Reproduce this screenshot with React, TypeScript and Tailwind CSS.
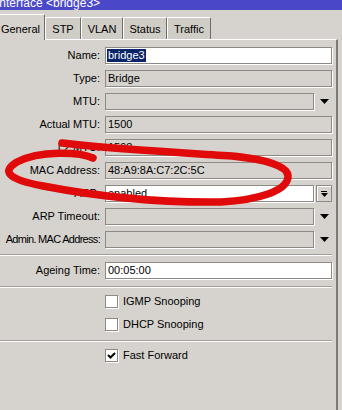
import React from "react";

const Arrow = () => (
  <svg width="9" height="5" viewBox="0 0 9 5">
    <path d="M0 0H9L4.5 5Z" fill="#000" />
  </svg>
);

type Kind = "white" | "gray";
type Tail = "none" | "arrow" | "button";

function Field({
  label,
  value,
  kind,
  tail,
  selected,
  tight,
}: {
  label: string;
  value?: string;
  kind: Kind;
  tail: Tail;
  selected?: boolean;
  tight?: boolean;
}) {
  return (
    <div className="flex h-[17px] items-center">
      <div className="flex w-[100px] shrink-0 justify-end whitespace-nowrap">
        <span className={tight ? "tracking-[-0.7px]" : ""}>{label}</span>
      </div>
      <div
        className={
          "ml-[5px] flex h-[17px] items-center border border-[#8d8a85] pl-[1px] shadow-[1px_1px_0_#ffffff] " +
          (kind === "white" ? "bg-white " : "bg-[#d6d3ce] ") +
          (tail === "none" ? "w-[227px]" : "w-[209px]")
        }
      >
        {value !== undefined &&
          (selected ? (
            <span className="bg-[#0a246a] px-[1px] leading-[13px] text-white">{value}</span>
          ) : (
            <span className="pl-[1px]">{value}</span>
          ))}
      </div>
      {tail === "arrow" && (
        <div className="flex h-[17px] w-[18px] items-center pl-[6px]">
          <Arrow />
        </div>
      )}
      {tail === "button" && (
        <div className="ml-[2px] flex h-[17px] w-[16px] flex-col items-center justify-center border border-[#8d8a85] bg-[#d6d3ce] shadow-[inset_1px_1px_0_#ffffff]">
          <div className="h-[1px] w-[6px] bg-black" />
          <div className="mt-[1px]">
            <svg width="7" height="4" viewBox="0 0 7 4">
              <path d="M0 0H7L3.5 4Z" fill="#000" />
            </svg>
          </div>
        </div>
      )}
    </div>
  );
}

function Check({ label, checked }: { label: string; checked?: boolean }) {
  return (
    <div className="flex h-[23px] items-center pl-[105px]">
      <div className="flex h-[13px] w-[13px] items-center justify-center border border-[#8d8a85] bg-white shadow-[1px_1px_0_#ffffff]">
        {checked && (
          <svg width="9" height="9" viewBox="0 0 9 9">
            <path d="M1 4 L3.5 6.5 L8 2" stroke="#000" strokeWidth="2" fill="none" />
          </svg>
        )}
      </div>
      <span className="ml-[5px]">{label}</span>
    </div>
  );
}

const Sep = ({ className }: { className: string }) => (
  <div className={"w-[332px] border-t border-b border-t-[#a19e98] border-b-white " + className} />
);

export default function App() {
  const tabs = [
    { name: "STP", w: "w-[36px]" },
    { name: "VLAN", w: "w-[42px]" },
    { name: "Status", w: "w-[44px]" },
    { name: "Traffic", w: "w-[44px]" },
  ];
  return (
    <div
      className="relative h-[410px] w-[342px] overflow-hidden bg-[#d6d3ce] text-[11px] text-black"
      style={{ fontFamily: '"Liberation Sans", Arial, sans-serif' }}
    >
      <div className="h-[10px] overflow-hidden bg-[#4a48c9]">
        <div className="ml-[-4px] mt-[-3px] whitespace-nowrap text-[12px] leading-[12px] text-white">
          Interface &lt;bridge3&gt;
        </div>
      </div>
      <div className="mt-[4px] flex h-[25px] items-end">
        <div className="relative z-10 -mb-px ml-[-4px] flex h-[26px] w-[49px] items-start justify-center rounded-t-[2px] border-l border-t border-r border-l-white border-t-white border-r-[#6e6c68] bg-[#d6d3ce] pt-[6px]">
          General
        </div>
        {tabs.map((t) => (
          <div
            key={t.name}
            className={
              "flex h-[22px] items-center justify-center rounded-t-[2px] border-l border-t border-r border-l-white border-t-white border-r-[#6e6c68] bg-[#d0cdc7] pt-[2px] " +
              t.w
            }
          >
            {t.name}
          </div>
        ))}
      </div>
      <div className="h-[371px] w-[338px] border-t border-r-2 border-t-white border-r-[#7d7b77] pt-[7px]">
        <div className="flex flex-col gap-[6px]">
          <Field label="Name:" value="bridge3" kind="white" tail="none" selected />
          <Field label="Type:" value="Bridge" kind="gray" tail="none" />
          <Field label="MTU:" kind="gray" tail="arrow" />
          <Field label="Actual MTU:" value="1500" kind="gray" tail="none" />
          <Field label="L2 MTU:" value="1598" kind="gray" tail="none" />
          <Field label="MAC Address:" value="48:A9:8A:C7:2C:5C" kind="gray" tail="none" />
          <Field label="ARP:" value="enabled" kind="white" tail="button" />
          <Field label="ARP Timeout:" kind="gray" tail="arrow" />
          <Field label="Admin. MAC Address:" kind="gray" tail="arrow" tight />
        </div>
        <Sep className="mt-[6px]" />
        <div className="mt-[6px]">
          <Field label="Ageing Time:" value="00:05:00" kind="white" tail="none" />
        </div>
        <Sep className="mt-[7px]" />
        <div className="mt-[2px]">
          <Check label="IGMP Snooping" />
          <Check label="DHCP Snooping" />
        </div>
        <Sep className="mt-[4px]" />
        <div className="mt-[2px]">
          <Check label="Fast Forward" checked />
        </div>
      </div>
      <svg className="pointer-events-none absolute left-0 top-0" width="342" height="410" viewBox="0 0 342 410">
        <path
          d="M93 158 C80 152 40 150 17 162 C2 171 6 179 43 186 C90 195 150 203 221 202 C258 200 287 191 288 177 C289 165 262 159 232 156 C175 152 110 149 62 143"
          stroke="#e00a0a"
          strokeWidth="7.5"
          strokeLinecap="round"
          strokeLinejoin="round"
          fill="none"
        />
      </svg>
    </div>
  );
}
